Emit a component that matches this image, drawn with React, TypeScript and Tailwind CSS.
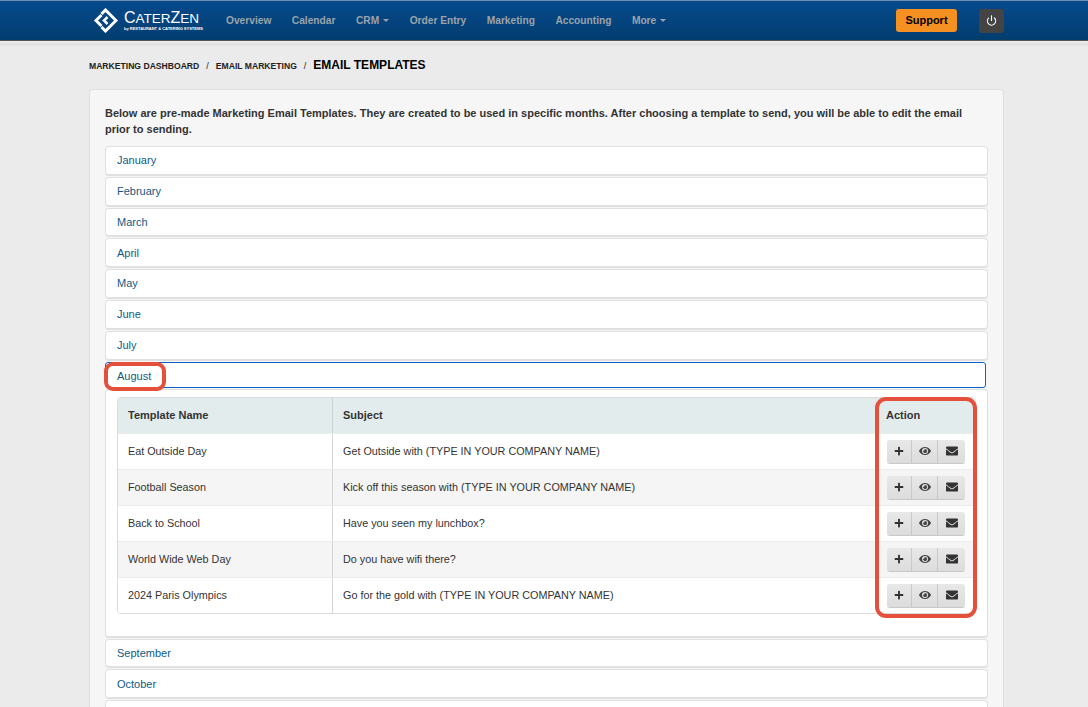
import { Power } from "lucide-react";
import { FaEnvelope, FaEye, FaPlus } from "react-icons/fa";

const navItems = [
  { name: "Overview" },
  { name: "Calendar" },
  { name: "CRM", caret: true },
  { name: "Order Entry" },
  { name: "Marketing" },
  { name: "Accounting" },
  { name: "More", caret: true },
];

const before = ["January", "February", "March", "April", "May", "June", "July"];
const after = ["September", "October", "November", "December"];

const templates = [
  { name: "Eat Outside Day", subject: "Get Outside with (TYPE IN YOUR COMPANY NAME)" },
  { name: "Football Season", subject: "Kick off this season with (TYPE IN YOUR COMPANY NAME)" },
  { name: "Back to School", subject: "Have you seen my lunchbox?" },
  { name: "World Wide Web Day", subject: "Do you have wifi there?" },
  { name: "2024 Paris Olympics", subject: "Go for the gold with (TYPE IN YOUR COMPANY NAME)" },
];

function Logo() {
  return (
    <div className="w-[133px] shrink-0 flex items-center gap-[6px]">
      <svg width="25" height="25" viewBox="0 0 25 25" fill="none" stroke="#fff" strokeWidth="3">
        <path d="M8.5 6 L12.5 2 L23 12.5 L12.5 23 L8.5 19" />
        <path d="M8.5 7 L3 12.5 L8.5 18" />
        <path d="M14.5 9 L11 12.5 L14.5 16" strokeWidth="2.5" />
      </svg>
      <div className="flex flex-col text-white">
        <span className="text-[16px] leading-[15px] whitespace-nowrap">
          C<span className="text-[13.5px]">ATER</span>Z<span className="text-[13.5px]">EN</span>
        </span>
        <span className="text-[4px] leading-[5px] font-bold whitespace-nowrap">by RESTAURANT &amp; CATERING SYSTEMS</span>
      </div>
    </div>
  );
}

function MonthRow({ name }: { name: string }) {
  return (
    <div className="h-[29.8px] flex items-center px-[11px] bg-white rounded-[4px] border border-[#e0e0e0] border-b-2 text-[11px] text-[#0f5a85]">
      {name}
    </div>
  );
}

function ActionButtons() {
  return (
    <div className="ml-px flex h-[23px] w-[78px] rounded-[3px] bg-gradient-to-b from-[#e8e8e8] to-[#dcdcdc] text-[#333] shadow-[0_1px_0_#c8c8c8]">
      <div className="w-[25px] flex items-center justify-center border-r border-[#c9c9c9]">
        <FaPlus size={10} />
      </div>
      <div className="w-[26px] flex items-center justify-center border-r border-[#c9c9c9]">
        <FaEye size={12} className="text-[#444]" />
      </div>
      <div className="flex-1 flex items-center justify-center">
        <FaEnvelope size={12} />
      </div>
    </div>
  );
}

export default function App() {
  return (
    <div className="relative h-[707px] overflow-hidden bg-[#ebebeb] font-['Liberation_Sans',Arial,sans-serif]">
      {/* top bar */}
      <div className="h-[41px] border-t border-[#6c8fb4] border-b border-b-[#555] bg-gradient-to-b from-[#054a8e] to-[#033d6e] flex items-center pl-[93px]">
        <Logo />
        <nav className="flex items-center gap-[20.5px] text-[10.2px] font-bold text-[#9aa3ab]">
          {navItems.map((item) => (
            <span key={item.name} className="flex items-center gap-[4px] whitespace-nowrap">
              {item.name}
              {item.caret && (
                <svg width="6" height="3" viewBox="0 0 6 3" fill="currentColor">
                  <polygon points="0,0 6,0 3,3" />
                </svg>
              )}
            </span>
          ))}
        </nav>
        <div className="ml-auto mr-[84px] flex items-center gap-[22px]">
          <button className="h-[23px] w-[61px] rounded-[3px] bg-[#f59023] text-[11px] font-bold text-black">Support</button>
          <button className="h-[24px] w-[25px] rounded-[3px] bg-[#444] flex items-center justify-center text-white">
            <Power size={11} strokeWidth={2.5} />
          </button>
        </div>
      </div>
      <div className="h-[3px] mt-[2px] bg-[#e2e2e2]" />

      {/* breadcrumb */}
      <div className="flex items-baseline pl-[89px] mt-[10px] h-[16px] text-[#222] whitespace-nowrap">
        <span className="text-[8.6px] font-bold">MARKETING DASHBOARD</span>
        <span className="text-[9px] mx-[7px]">/</span>
        <span className="text-[8.6px] font-bold">EMAIL MARKETING</span>
        <span className="text-[9px] mx-[7px]">/</span>
        <span className="text-[12px] font-bold text-black">EMAIL TEMPLATES</span>
      </div>

      {/* card */}
      <div className="ml-[89px] mt-[17px] w-[915px] rounded-[4px] border border-[#dedede] bg-[#f6f6f6] px-[15px] pt-[15px]">
        <p className="text-[11px] leading-[16px] font-bold text-[#333] mb-[9px]">
          Below are pre-made Marketing Email Templates. They are created to be used in specific months. After choosing a template to send, you will be able to edit the email prior to sending.
        </p>
        <div className="flex flex-col gap-px">
          {before.map((m) => (
            <MonthRow key={m} name={m} />
          ))}
          <div className="h-[26px] mr-[2px] pt-[3px] flex items-center px-[11px] bg-white rounded-[3px] border border-[#0b62c4] text-[11px] text-[#0f5a85]">
            August
          </div>
          <div className="h-[249px] bg-white rounded-[4px] border border-[#e0e0e0] border-b-2 pt-[7px] px-[11px]">
            <div className="rounded-[4px] border border-[#dcdcdc] overflow-hidden text-[10.8px] text-[#333]">
              <div className="flex h-[35px] bg-[#e3eced] font-bold text-[11px] items-center">
                <div className="w-[215px] h-full flex items-center pl-[10px] border-r border-[#c9d2d3]">Template Name</div>
                <div className="flex-1 pl-[10px]">Subject</div>
                <div className="w-[89px]">Action</div>
              </div>
              {templates.map((t, i) => (
                <div key={t.name} className={`flex h-[36px] items-center border-t border-[#ececec] ${i % 2 === 1 ? "bg-[#f5f5f5]" : "bg-white"}`}>
                  <div className="w-[215px] h-full flex items-center pl-[10px] border-r border-[#d5d5d5]">{t.name}</div>
                  <div className="flex-1 pl-[10px]">{t.subject}</div>
                  <div className="w-[89px]">
                    <ActionButtons />
                  </div>
                </div>
              ))}
            </div>
          </div>
          {after.map((m) => (
            <MonthRow key={m} name={m} />
          ))}
        </div>
      </div>

      {/* annotation outlines */}
      <div className="absolute left-[104px] top-[362px] w-[62px] h-[29px] rounded-[9px] border-4 border-[#e5503c]" />
      <div className="absolute left-[875px] top-[397px] w-[102px] h-[221px] rounded-[11px] border-4 border-[#e5503c]" />
    </div>
  );
}
